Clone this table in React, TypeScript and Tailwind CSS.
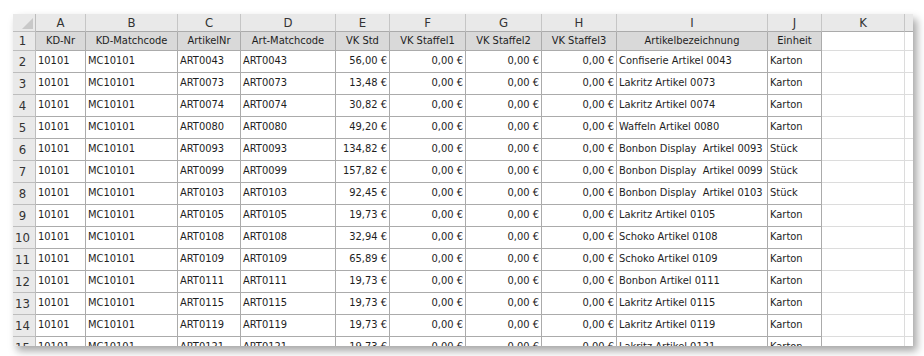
const COLS = [
  { key: 'A', w: 50, head: 'KD-Nr', align: 'left' },
  { key: 'B', w: 92, head: 'KD-Matchcode', align: 'left' },
  { key: 'C', w: 63, head: 'ArtikelNr', align: 'left' },
  { key: 'D', w: 95, head: 'Art-Matchcode', align: 'left' },
  { key: 'E', w: 54, head: 'VK Std', align: 'right' },
  { key: 'F', w: 76, head: 'VK Staffel1', align: 'right' },
  { key: 'G', w: 76, head: 'VK Staffel2', align: 'right' },
  { key: 'H', w: 75, head: 'VK Staffel3', align: 'right' },
  { key: 'I', w: 151, head: 'Artikelbezeichnung', align: 'left' },
  { key: 'J', w: 54, head: 'Einheit', align: 'left' },
];

const ITEMS: [string, string, string, string][] = [
  ['ART0043', '56,00 €', 'Confiserie Artikel 0043', 'Karton'],
  ['ART0073', '13,48 €', 'Lakritz Artikel 0073', 'Karton'],
  ['ART0074', '30,82 €', 'Lakritz Artikel 0074', 'Karton'],
  ['ART0080', '49,20 €', 'Waffeln Artikel 0080', 'Karton'],
  ['ART0093', '134,82 €', 'Bonbon Display  Artikel 0093', 'Stück'],
  ['ART0099', '157,82 €', 'Bonbon Display  Artikel 0099', 'Stück'],
  ['ART0103', '92,45 €', 'Bonbon Display  Artikel 0103', 'Stück'],
  ['ART0105', '19,73 €', 'Lakritz Artikel 0105', 'Karton'],
  ['ART0108', '32,94 €', 'Schoko Artikel 0108', 'Karton'],
  ['ART0109', '65,89 €', 'Schoko Artikel 0109', 'Karton'],
  ['ART0111', '19,73 €', 'Bonbon Artikel 0111', 'Karton'],
  ['ART0115', '19,73 €', 'Lakritz Artikel 0115', 'Karton'],
  ['ART0119', '19,73 €', 'Lakritz Artikel 0119', 'Karton'],
  ['ART0121', '19,73 €', 'Lakritz Artikel 0121', 'Karton'],
];

function rowValues(it: [string, string, string, string]) {
  return ['10101', 'MC10101', it[0], it[0], it[1], '0,00 €', '0,00 €', '0,00 €', it[2], it[3]];
}

export default function App() {
  return (
    <div className="min-h-screen bg-white pl-[13px] pt-[14px]">
      <div
        className="h-[332px] w-[900px] overflow-hidden bg-white text-[11px] text-[#1e1e1e] shadow-[4px_5px_8px_rgba(0,0,0,0.35)]"
        style={{ fontFamily: '"DejaVu Sans Condensed", "DejaVu Sans", sans-serif' }}
      >
        {/* Column letters */}
        <div className="flex h-[18px] bg-[#e9e9e9]">
          <div className="relative w-[23px] shrink-0 border-r border-b border-[#bdbdbd]">
            <div className="absolute right-[2px] bottom-[2px] h-0 w-0 border-b-[11px] border-l-[11px] border-b-[#c8c8c8] border-l-transparent" />
          </div>
          {COLS.map(c => (
            <div
              key={c.key}
              style={{ width: c.w }}
              className="flex shrink-0 items-center justify-center border-r border-b border-[#c6c6c6] border-b-[#ababab] text-[13px] text-[#333]"
            >
              {c.key}
            </div>
          ))}
          <div className="flex w-[83px] shrink-0 items-center justify-center border-r border-b border-[#c6c6c6] border-b-[#ababab] text-[13px] text-[#333]">
            K
          </div>
          <div className="w-[8px] shrink-0 border-b border-[#ababab]" />
        </div>

        {/* Row 1 - headings */}
        <div className="flex h-[19px]">
          <div className="flex w-[23px] shrink-0 items-center justify-center border-r border-b border-[#bdbdbd] bg-[#e9e9e9] pr-[3px] text-[13px] text-[#333]">
            1
          </div>
          {COLS.map(c => (
            <div
              key={c.key}
              style={{ width: c.w }}
              className="flex shrink-0 items-center justify-center overflow-hidden whitespace-nowrap border-r border-b border-[#ababab] bg-[#d9d9d9]"
            >
              {c.head}
            </div>
          ))}
          <div className="w-[83px] shrink-0 border-r border-b border-[#dcdcdc]" />
          <div className="w-[8px] shrink-0 border-b border-[#dcdcdc]" />
        </div>

        {/* Data rows */}
        {ITEMS.map((it, i) => (
          <div key={i} className="flex h-[22px]">
            <div className="flex w-[23px] shrink-0 items-center justify-center border-r border-b border-[#bdbdbd] bg-[#e9e9e9] pr-[3px] text-[13px] text-[#333]">
              {i + 2}
            </div>
            {rowValues(it).map((v, j) => (
              <div
                key={j}
                style={{ width: COLS[j].w }}
                className={`flex shrink-0 items-center overflow-hidden whitespace-pre border-r border-b border-[#ababab] px-[2px] ${
                  COLS[j].align === 'right' ? 'justify-end' : 'justify-start'
                }`}
              >
                {v}
              </div>
            ))}
            <div className="w-[83px] shrink-0 border-r border-b border-[#dcdcdc]" />
            <div className="w-[8px] shrink-0 border-b border-[#dcdcdc]" />
          </div>
        ))}
      </div>
    </div>
  );
}
